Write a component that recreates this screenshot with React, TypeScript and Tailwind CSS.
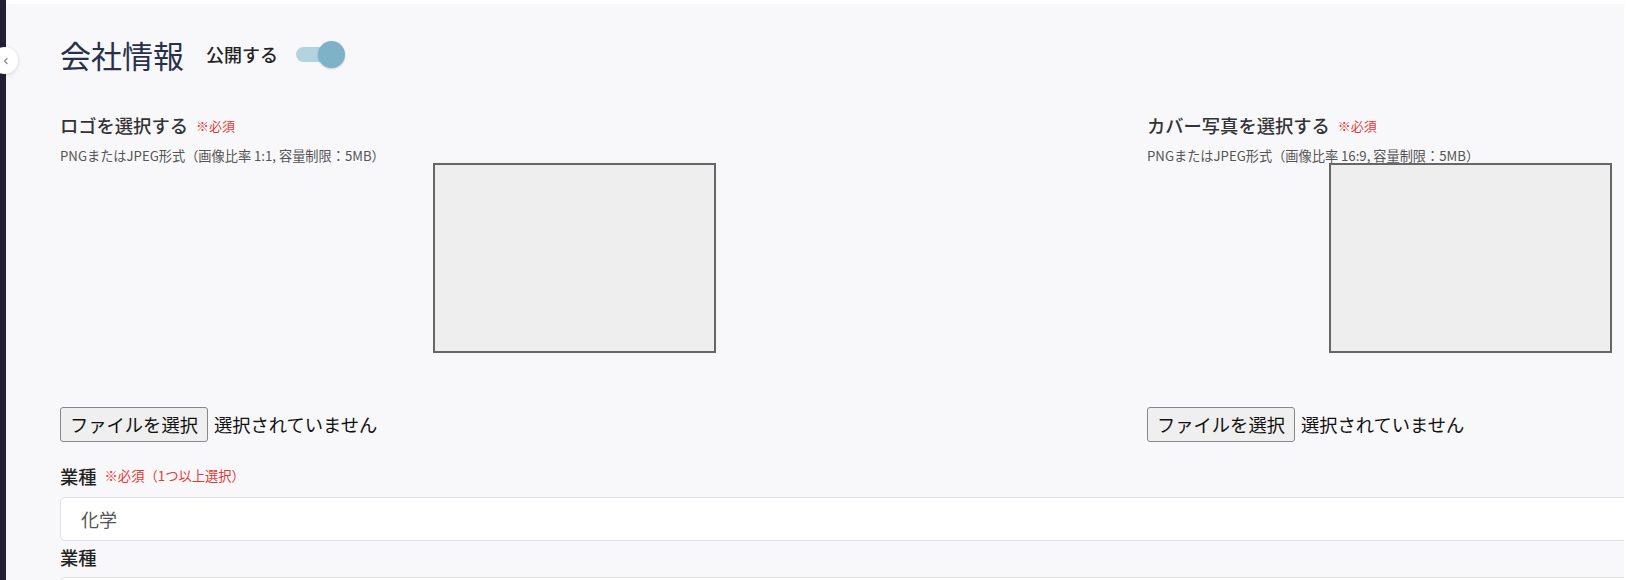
import React from 'react';

const jp = { fontFamily: '"Noto Sans CJK JP", "Noto Sans", sans-serif' };

function ImageField({ label, note, boxOffset }: { label: string; note: string; boxOffset: string }) {
  return (
    <div className="flex flex-col">
      <div className="flex items-center h-[20px]">
        <span className="text-[18.3px] font-medium text-[#333] leading-none">{label}</span>
        <span className="ml-[8px] text-[13px] text-[#e53935] leading-none">※必須</span>
      </div>
      <p className="mt-[14px] text-[13.2px] leading-[14px] text-[#555] whitespace-nowrap">{note}</p>
      <div className={`${boxOffset} w-[283px] h-[190px] border-2 border-[#666] bg-[#eeeeee]`} />
      <div className="flex items-center mt-[54px] h-[35px]">
        <button className="h-[35px] px-[9px] rounded-[3px] border border-[#888] bg-[#efefef] text-[18.3px] text-[#111] leading-none">
          ファイルを選択
        </button>
        <span className="ml-[6px] text-[18.3px] text-[#111]">選択されていません</span>
      </div>
    </div>
  );
}

export default function App() {
  return (
    <div className="w-[1634px] h-[580px] overflow-hidden flex bg-white" style={jp}>
      {/* sidebar edge */}
      <div className="w-[6px] h-full bg-[#231f35] shrink-0" />

      <div className="relative flex-1 flex flex-col">
        <div className="h-[4px] bg-white shadow-[0_2px_6px_rgba(0,0,0,0.06)]" />
        <div className="flex-1 bg-[#f8f8fa] pl-[54px] overflow-hidden">
          {/* title row */}
          <div className="flex items-center h-[34px] mt-[33px]">
            <h1 className="text-[31px] leading-none text-[#27314a]">会社情報</h1>
            <span className="ml-[22px] text-[18px] font-medium text-[#222]">公開する</span>
            <div className="relative ml-[18px] w-[49px] h-[27px] flex items-center">
              <div className="w-[38px] h-[15px] rounded-full bg-[#b3d3df]" />
              <div className="absolute right-0 w-[27px] h-[27px] rounded-full bg-[#7eb2c6] shadow-[0_1px_2px_rgba(0,0,0,0.2)]" />
            </div>
          </div>

          {/* image pickers */}
          <div className="flex mt-[44px]">
            <div className="w-[1087px] shrink-0">
              <ImageField
                label="ロゴを選択する"
                note="PNGまたはJPEG形式（画像比率 1:1, 容量制限：5MB）"
                boxOffset="ml-[373px]"
              />
            </div>
            <div className="shrink-0">
              <ImageField
                label="カバー写真を選択する"
                note="PNGまたはJPEG形式（画像比率 16:9, 容量制限：5MB）"
                boxOffset="ml-[182px]"
              />
            </div>
          </div>

          {/* industry */}
          <div className="flex items-center mt-[24px] h-[20px]">
            <span className="text-[18.3px] font-medium text-[#222] leading-none">業種</span>
            <span className="ml-[8px] text-[13.3px] text-[#e53935] leading-none">※必須（1つ以上選択）</span>
          </div>
          <div className="mt-[11px] -mr-[20px] h-[44px] rounded-l-[5px] border border-[#dfe1e8] bg-white flex items-center pl-[20px]">
            <span className="text-[18px] text-[#555]">化学</span>
          </div>
          <div className="flex items-center mt-[2px] h-[28px]">
            <span className="text-[18.3px] font-medium text-[#222] leading-none">業種</span>
          </div>
          <div className="mt-[6px] -mr-[20px] h-[44px] rounded-l-[5px] border border-[#dfe1e8] bg-white" />
        </div>

        {/* collapse button */}
        <button className="absolute -left-[15px] top-[47px] w-[27px] h-[27px] rounded-full bg-white shadow-[0_1px_4px_rgba(0,0,0,0.15)] flex items-center justify-center">
          <svg width="8" height="8" viewBox="0 0 8 8" className="ml-[2px]">
            <path d="M5 1.5 L2.5 4 L5 6.5" fill="none" stroke="#888" strokeWidth="1.2" strokeLinecap="round" />
          </svg>
        </button>
      </div>

      <div className="w-[10px] h-full bg-white shrink-0" />
    </div>
  );
}
